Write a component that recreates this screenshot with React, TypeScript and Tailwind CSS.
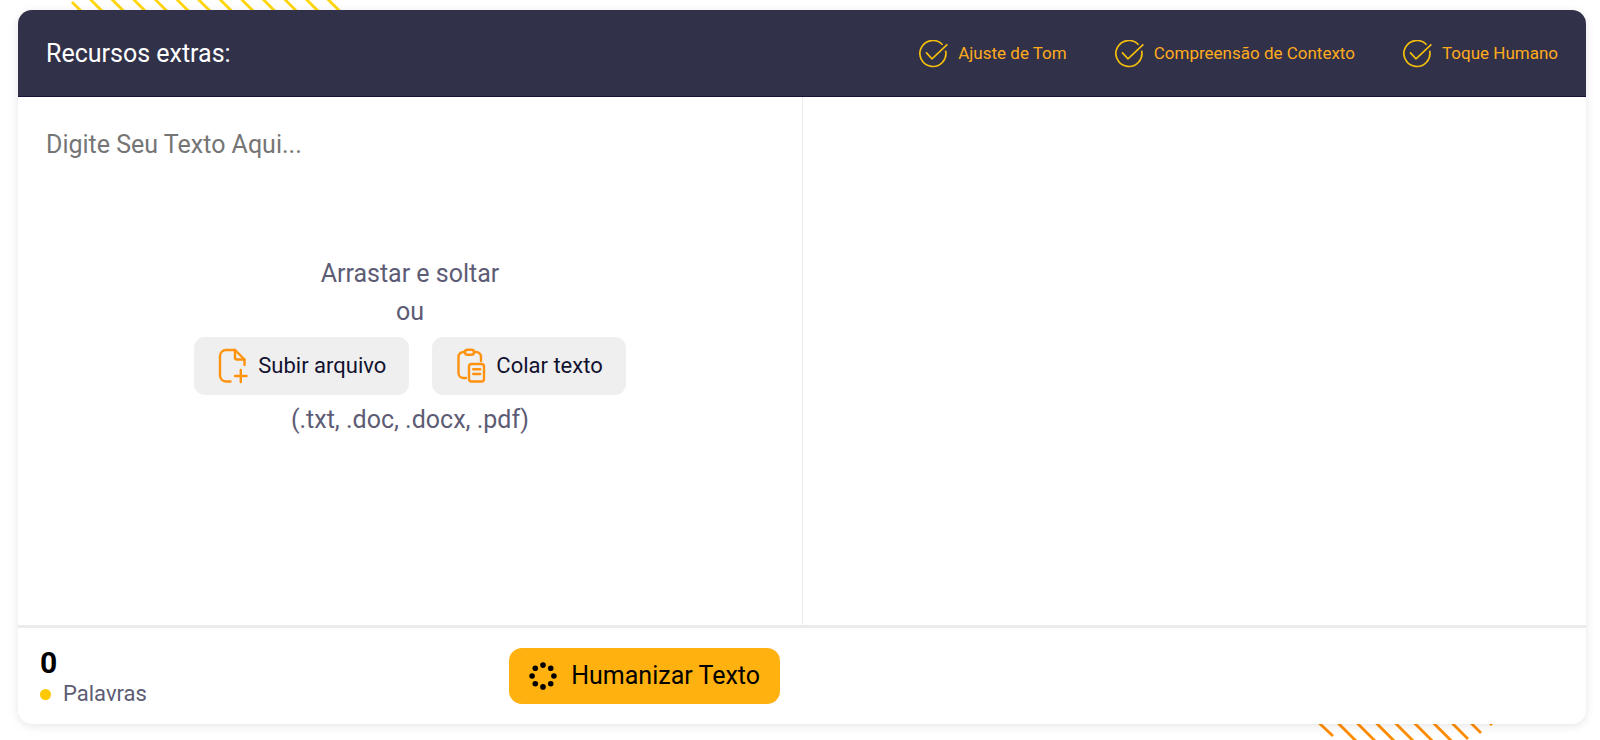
import type { ReactNode } from 'react';

const features = ['Ajuste de Tom', 'Compreensão de Contexto', 'Toque Humano'];

const topStripes = Array.from({ length: 12 }, (_, i) => 90 + i * 21.6);
const bottomStripes = Array.from({ length: 6 }, (_, i) => 20 + i * 19.1);
const spinnerDots = Array.from({ length: 8 }, (_, i) => (i * Math.PI) / 4);

function CheckIcon() {
  return (
    <svg
      width="29"
      height="28"
      viewBox="0 0 29 28"
      fill="none"
      stroke="#f2bd0c"
      strokeWidth="1.7"
      aria-hidden="true"
    >
      <path d="M23.6 4.8A13 13 0 1 0 26.6 10.6" />
      <path d="M7 12.4l6 6.4L28.4 4.4" />
    </svg>
  );
}

function FilePlusIcon() {
  return (
    <svg
      width="30"
      height="36"
      viewBox="0 0 30 36"
      fill="none"
      stroke="#ff930f"
      strokeWidth="2.4"
      strokeLinecap="round"
      strokeLinejoin="round"
      aria-hidden="true"
    >
      <path d="M12.5 33.5H8a6 6 0 0 1-6-6V8a6 6 0 0 1 6-6h9l9.5 9.5V17" />
      <path d="M17 2v7.5a2 2 0 0 0 2 2h7.5M22.8 22v12M17 28h11.5" />
    </svg>
  );
}

function PasteIcon() {
  return (
    <svg
      width="30"
      height="36"
      viewBox="0 0 30 36"
      fill="none"
      stroke="#ff930f"
      strokeWidth="2.4"
      strokeLinecap="round"
      strokeLinejoin="round"
      aria-hidden="true"
    >
      <path d="M9 4H7.5a5 5 0 0 0-5 5v16a5 5 0 0 0 5 5H10M18 4h2a5 5 0 0 1 5 5v4" />
      <rect x="9" y="1.8" width="9" height="5" rx="2.5" />
      <rect x="13" y="16" width="15" height="17.5" rx="2.5" />
      <path d="M17.2 21.2h7M17.2 26h7" />
    </svg>
  );
}

function SpinnerIcon() {
  return (
    <svg width="28" height="28" viewBox="-14 -14 28 28" aria-hidden="true">
      {spinnerDots.map((a) => (
        <circle
          key={a}
          cx={Math.cos(a) * 10.9}
          cy={Math.sin(a) * 10.9}
          r="2.8"
        />
      ))}
    </svg>
  );
}

function FileButton({ icon, label }: { icon: ReactNode; label: string }) {
  return (
    <button
      type="button"
      className="flex h-[58px] items-center gap-2.5 rounded-[11px] bg-[#efefef] pr-[23px] pl-6 text-[22px] text-[#12122f]"
    >
      {icon}
      {label}
    </button>
  );
}

export default function App() {
  return (
    <div className="relative overflow-hidden bg-white pt-2.5 pr-3.5 pb-4 pl-[18px] font-['Roboto',sans-serif]">
      <svg
        className="absolute top-0 left-0"
        width="360"
        height="12"
        stroke="#ffd60a"
        strokeWidth="2.8"
        aria-hidden="true"
      >
        <path d="M72 2l12 12" />
        {topStripes.map((x) => (
          <path key={x} d={`M${x - 1} -2l16 16`} />
        ))}
      </svg>
      <svg
        className="absolute right-[100px] bottom-0"
        width="200"
        height="18"
        stroke="#ff8c00"
        strokeWidth="2.8"
        aria-hidden="true"
      >
        <path d="M18 0L33 14" />
        {bottomStripes.map((x) => (
          <path key={x} d={`M${x + 17} 0l20 20`} />
        ))}
        <path d="M151 0l17 17M170 0l11 11M189 0l3 3" />
      </svg>

      <main className="relative overflow-hidden rounded-[14px] bg-white shadow-[0_2px_10px_rgba(0,0,0,0.1)]">
        <header className="flex h-[87px] items-center justify-between border-b border-[#14143c] bg-[#313149] px-7 pt-0.5">
          <h1 className="text-[25px] text-white">Recursos extras:</h1>
          <ul className="flex gap-12 text-[17px] text-[#ffab1c]">
            {features.map((feature) => (
              <li key={feature} className="flex items-center gap-2.5">
                <CheckIcon />
                {feature}
              </li>
            ))}
          </ul>
        </header>

        <section className="grid grid-cols-2">
          <div className="flex h-[528px] flex-col">
            <textarea
              aria-label="Digite Seu Texto Aqui"
              placeholder="Digite Seu Texto Aqui..."
              className="h-[158px] resize-none px-7 pt-7 text-[25px] leading-10 outline-none placeholder:text-[#757575]"
            />
            <div className="flex flex-col items-center text-[25px] leading-[38px] text-[#5d5c75]">
              <p>Arrastar e soltar</p>
              <p>ou</p>
              <div className="my-1.5 flex gap-[23px]">
                <FileButton icon={<FilePlusIcon />} label="Subir arquivo" />
                <FileButton icon={<PasteIcon />} label="Colar texto" />
              </div>
              <p>(.txt, .doc, .docx, .pdf)</p>
            </div>
          </div>
          <div className="border-l border-[#ebebeb]" />
        </section>

        <footer className="grid h-[99px] grid-cols-2 border-t-3 border-[#ebebeb]">
          <div className="flex items-center justify-between pr-[22px] pl-[22px]">
            <div className="pt-1">
              <p className="text-[30px] leading-8 font-bold text-black">0</p>
              <p className="flex items-center gap-3 text-[22px] leading-[30px] text-[#5d5c75]">
                <span className="size-[11px] rounded-full bg-[#ffc800]" />
                Palavras
              </p>
            </div>
            <button
              type="button"
              className="flex h-14 items-center gap-3.5 rounded-[13px] bg-[#ffb20f] px-5 text-[25px] text-black"
            >
              <SpinnerIcon />
              Humanizar Texto
            </button>
          </div>
        </footer>
      </main>
    </div>
  );
}
